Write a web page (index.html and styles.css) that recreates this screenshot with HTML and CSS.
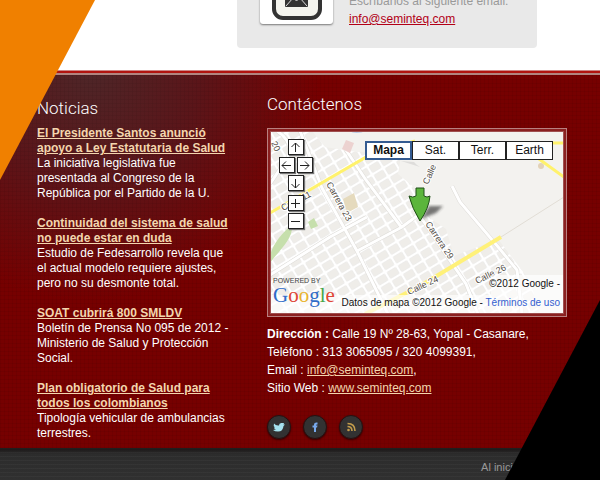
FILE: index.html
```html
<!DOCTYPE html>
<html lang="es">
<head>
<meta charset="utf-8">
<title>Seminteq</title>
<link rel="stylesheet" href="styles.css">
</head>
<body>
<div class="page">
  <header class="top">
    <section class="mail-card">
      <span class="mail-frame">
        <svg width="73" height="74" viewBox="0 0 73 74" aria-hidden="true">
          <rect x="14" y="22" width="46" height="46" rx="9" fill="#f4f4ee" stroke="#333" stroke-width="4"/>
          <rect x="25" y="38" width="23" height="19" rx="1" fill="#333"/>
          <path d="M26 40L36.500 51L47 40M26 56L33 48M47 56L40 48" fill="none" stroke="#ddd"/>
        </svg>
      </span>
      <p class="mail-text">Escríbanos al siguiente email:<br><a href="mailto:info@seminteq.com">info@seminteq.com</a></p>
    </section>
  </header>
  <main class="info">
    <section class="news">
      <h2>Noticias</h2>
      <article><a href="#n1">El Presidente Santos anunció<br>apoyo a Ley Estatutaria de Salud</a><p>La iniciativa legislativa fue<br>presentada al Congreso de la<br>República por el Partido de la U.</p></article>
      <article><a href="#n2">Continuidad del sistema de salud<br>no puede estar en duda</a><p>Estudio de Fedesarrollo revela que<br>el actual modelo requiere ajustes,<br>pero no su desmonte total.</p></article>
      <article><a href="#n3">SOAT cubrirá 800 SMLDV</a><p>Boletín de Prensa No 095 de 2012 -<br>Ministerio de Salud y Protección<br>Social.</p></article>
      <article><a href="#n4">Plan obligatorio de Salud para<br>todos los colombianos</a><p>Tipología vehicular de ambulancias<br>terrestres.</p></article>
    </section>
    <section class="contact">
      <h2>Contáctenos</h2>
      <div class="map">
        <svg class="map-art" viewBox="0 0 294 183" role="img" aria-label="Mapa de Yopal">
          <defs>
            <pattern id="blocks" width="13" height="10" patternUnits="userSpaceOnUse" patternTransform="rotate(-31)">
              <rect width="13" height="10" fill="#dcdad6"/>
              <rect x="2" y="2" width="9" height="6" fill="#efede9"/>
              <path d="M0 0H13M0 0V10M13 0V10M0 10H13" stroke="#fff" stroke-width="3"/>
            </pattern>
            <filter id="soft"><feGaussianBlur stdDeviation="1.500"/></filter>
          </defs>
          <rect width="294" height="183" fill="#f3f2ef"/>
          <path d="M0 0H42L55 16L87 21L132 19L128 43L151 62L157 85L176 98L184 125L210 115L228 108L260 150L270 183H0Z" fill="url(#blocks)"/>
          <path d="M0 53L18 26C24 13 12 3 7 0M30 0L52 57L87 120L118 183M87 120L132 96L159 76M150 85L196 153L208 183M182 55L190 71L229 117L247 139L252 183M0 144L60 106L97 86M76 19L96 49L132 97" fill="none" stroke="#dddbd7" stroke-width="4"/>
          <path d="M0 53L18 26C24 13 12 3 7 0M30 0L52 57L87 120L118 183M87 120L132 96L159 76M150 85L196 153L208 183M182 55L190 71L229 117L247 139L252 183M0 144L60 106L97 86M76 19L96 49L132 97" fill="none" stroke="#fff" stroke-width="3"/>
          <path d="M231 106L294 66" stroke="#e1ddd5"/>
          <path d="M76 9L84 12L80 22L72 18Z" fill="#ecd2d0"/>
          <path d="M79 0Q86 4 96 0" fill="#b8cae5"/>
          <path d="M73 68L84 62L88 76L77 82Z" fill="#e5dabd"/>
          <path d="M0 124C4 111 13 101 22 94C23 108 11 117 0 132Z" fill="#c6dfac"/>
          <path d="M38 91L44 87L48 95L41 98Z" fill="#c6dfac"/>
          <path d="M131 30L144 31L147 34L150 36Z" fill="#dedddb"/>
          <circle cx="271" cy="35" r="3" fill="#e2d2b7"/>
          <path d="M0 82L98 25L145 10M280 12H294M269 28L294 46" fill="none" stroke="#fff26c" stroke-width="3"/>
          <path d="M95 183L150 155L231 106" fill="none" stroke="#fff179" stroke-width="4"/>
          <g class="road-names">
            <text transform="translate(13 80) rotate(-27)">Calle 11</text>
            <text transform="translate(56 53) rotate(61)">Carrera 23</text>
            <text transform="translate(1 12) rotate(65)">20</text>
            <text transform="translate(158 54) rotate(-66)">Calle</text>
            <text transform="translate(155 93) rotate(56)">Carrera 29</text>
            <text transform="translate(139 164) rotate(-25)">Calle 24</text>
            <text transform="translate(207 153) rotate(-26)">Calle 26</text>
          </g>
          <rect x="221" y="144" width="73" height="20" fill="#fff" opacity=".65"/>
          <rect y="164" width="294" height="19" fill="#fff" opacity=".65"/>
          <path d="M151 88L159 75L173 75L166 82Z" fill="#222" opacity=".6" filter="url(#soft)"/>
          <path d="M146 57H154V65Q157 67 160 65Q159 77 150 90Q142 77 139 65Q143 67 146 65Z" fill="#5bb53c" stroke="#1f4e18"/>
          <text class="powered" x="3" y="152">POWERED BY</text>
          <text class="google" x="3" y="171"><tspan fill="#306cc8">G</tspan><tspan fill="#df4636">o</tspan><tspan fill="#e9b32d">o</tspan><tspan fill="#306cc8">g</tspan><tspan fill="#49a746">l</tspan><tspan fill="#df4636">e</tspan></text>
        </svg>
        <div class="pan">
          <button class="up" aria-label="Arriba"><svg viewBox="0 0 13 13"><path d="M6.500 11V2M2.500 6L6.500 2L10.500 6"/></svg></button>
          <button class="left" aria-label="Izquierda"><svg viewBox="0 0 13 13"><path d="M11 6.500H2M6 2.500L2 6.500L6 10.500"/></svg></button>
          <button class="right" aria-label="Derecha"><svg viewBox="0 0 13 13"><path d="M2 6.500H11M7 2.500L11 6.500L7 10.500"/></svg></button>
          <button class="down" aria-label="Abajo"><svg viewBox="0 0 13 13"><path d="M6.500 2V11M2.500 7L6.500 11L10.500 7"/></svg></button>
          <button class="zin" aria-label="Acercar"><svg viewBox="0 0 13 13"><path d="M2 6.500H11M6.500 2V11"/></svg></button>
          <button class="zout" aria-label="Alejar"><svg viewBox="0 0 13 13"><path d="M2 6.500H11"/></svg></button>
        </div>
        <div class="types"><button class="on">Mapa</button><button>Sat.</button><button>Terr.</button><button>Earth</button></div>
        <div class="credits"><span>©2012 Google -</span><span>Datos de mapa ©2012 Google - <a href="#terms">Términos de uso</a></span></div>
      </div>
      <address><b>Dirección :</b> Calle 19 Nº 28-63, Yopal - Casanare,<br>Teléfono : 313 3065095 / 320 4099391,<br>Email : <a href="mailto:info@seminteq.com">info@seminteq.com</a>,<br>Sitio Web : <a href="#web">www.seminteq.com</a></address>
      <nav class="social">
        <a href="#tw" aria-label="Twitter"><svg viewBox="0 0 22 22"><path d="M6 7.500Q8 10 11 9.500Q11 6.500 14 7L16 7L15.500 8.500L17 8.500L15.500 10Q15 15.500 10 15.500Q7 15.500 5 14L8 13.500Q6 13 6 11.500L7 11.500Q5 9.500 6 7.500Z" fill="#a5e2ee"/></svg></a>
        <a href="#fb" aria-label="Facebook"><svg viewBox="0 0 22 22"><path d="M10 16V11.500H8.500V9.500H10V8.500Q10 6 13.500 6.500V8.500Q12 8 12 9.500H13.500L13 11.500H12V16Z" fill="#78a9ec"/></svg></a>
        <a href="#rss" aria-label="RSS"><svg viewBox="0 0 22 22"><circle cx="8.500" cy="14" r="1.300" fill="#c29c4c"/><path d="M7.500 10.500Q12 10.500 12 15M7.500 7.500Q15 7.500 15 15" fill="none" stroke="#c29c4c" stroke-width="1.600"/></svg></a>
      </nav>
    </section>
  </main>
  <footer><a href="#top">Al inicio</a></footer>
  <div class="corner corner-left"></div>
  <div class="corner corner-right"></div>
</div>
</body>
</html>
```

FILE: styles.css
```css
* { box-sizing: border-box; }
body { margin: 0; background: #fff; font: 12px/15px "Liberation Sans", Arial, sans-serif; }
h2, p { margin: 0; }
button { font: inherit; margin: 0; padding: 0; }
.page { position: relative; overflow: hidden; min-height: 100vh; display: flex; flex-direction: column; }

.top { height: 70px; padding: 0 63px 22px 237px; display: flex; align-items: flex-end; }
.mail-card { flex: 1; display: flex; align-items: flex-end; gap: 16px; padding: 24px 23px; background: #e9e9e9; border-radius: 4px; }
.mail-frame { flex: none; background: #fff; border-radius: 3px; box-shadow: 0 1px 2px #777; }
.mail-frame svg { display: block; }
.mail-text { color: #999; line-height: 18px; white-space: nowrap; margin-bottom: -4px; }
.mail-text a { color: #b20017; }

.info {
  flex: 1; display: flex; gap: 32px; padding: 18px 33px 7px 37px;
  border-top: 1px solid #c88; box-shadow: inset 0 2px #b1140f, inset 0 4px #b18580;
  background:
    repeating-linear-gradient(90deg, rgba(0,0,0,.05) 0 1px, transparent 1px 4px),
    repeating-linear-gradient(rgba(0,0,0,.05) 0 1px, transparent 1px 4px),
    radial-gradient(circle at 90px 0, #4e2628, #5b1519 110px, #760000 230px);
  color: #fff;
}
h2 { font: 300 17px/22px Roboto, sans-serif; color: #fff; }
.news { width: 198px; flex: none; padding-top: 8px; display: flex; flex-direction: column; gap: 15px; white-space: nowrap; }
.news h2 { margin-bottom: -8px; }
.news a { font-weight: bold; }
.news a, address a { color: #f3d6ae; }
.contact { flex: 1; padding-top: 4px; }
.contact h2 { margin-bottom: 13px; }

.map { position: relative; border: 1px solid #b98080; outline: 1px solid #a05050; outline-offset: -4px; padding: 2px; background: #8a2020; color: #111; }
.map-art { display: block; width: 100%; }
.road-names { font-size: 9px; fill: #554f48; stroke: #fff; stroke-width: 2px; paint-order: stroke; }
.powered { font-size: 7px; fill: #444; }
.google { font: 21px "Liberation Serif", serif; }
.pan { position: absolute; left: 11px; top: 10px; display: grid; grid-template: repeat(5, 16px) / repeat(4, 9px); row-gap: 2px; column-gap: 0; }
.pan button { width: 16px; height: 16px; background: #fff; border: 1px solid #222; box-shadow: 1px 1px 1px #777; }
.pan svg { display: block; width: 13px; height: 13px; fill: none; stroke: #222; }
.up { grid-area: 1 / 2 / 2 / 4; }
.left { grid-area: 2 / 1 / 3 / 3; }
.right { grid-area: 2 / 3 / 3 / 5; }
.down { grid-area: 3 / 2 / 4 / 4; }
.zin { grid-area: 4 / 2 / 5 / 4; margin-top: 2px; }
.zout { grid-area: 5 / 2 / 6 / 4; margin-top: 2px; }
.types { position: absolute; right: 13px; top: 12px; width: 188px; display: grid; grid-template-columns: repeat(4, 1fr); }
.types button { height: 19px; border: 1px solid #222; background: #fff; color: #111; }
.types .on { border: 2px solid #345b91; font-weight: bold; }
.credits { position: absolute; right: 6px; bottom: 4px; display: grid; justify-items: end; font-size: 10px; line-height: 19px; white-space: nowrap; }
.credits a { color: #3260d0; text-decoration: none; }

address { margin-top: 8px; line-height: 18px; font-style: normal; white-space: nowrap; }
.social { display: flex; gap: 12px; margin-top: 18px; }
.social a { width: 24px; height: 24px; border: 1px solid #261111; border-radius: 50%; background: #323232; box-shadow: 0 1px 2px #300; }
.social svg { display: block; }

footer {
  height: 32px; padding: 11px 81px 0 0; text-align: right; font-size: 11px; line-height: 16px;
  background: repeating-linear-gradient(rgba(255,255,255,.03) 0 1px, transparent 1px 4px), linear-gradient(#191515, #2c2c2c 6px, #303030);
}
footer a { color: #999; text-decoration: none; }
.corner { position: absolute; width: 95px; height: 180px; }
.corner-left { top: 0; left: 0; background: #f08000; clip-path: polygon(0 0, 100% 0, 0 100%); }
.corner-right { right: 0; bottom: 0; background: #000; clip-path: polygon(100% 0, 100% 100%, 0 100%); }
```
